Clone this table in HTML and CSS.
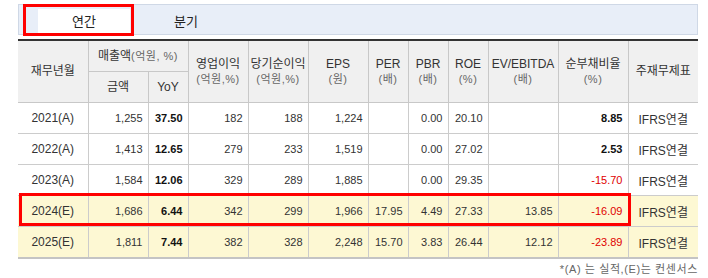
FILE: index.html
```html
<!DOCTYPE html>
<html lang="ko">
<head>
<meta charset="utf-8">
<link rel="stylesheet" href="styles.css">
</head>
<body>
<div class="wrap">
  <div class="tabbar">
    <div class="tab on">연간</div>
    <div class="tab">분기</div>
  </div>
  <div class="mark mark-tab"></div>
  <table class="fin">
    <colgroup>
      <col style="width:70px"><col style="width:60px"><col style="width:40px"><col style="width:60px"><col style="width:60px"><col style="width:60px"><col style="width:40px"><col style="width:40px"><col style="width:40px"><col style="width:70px"><col style="width:70px"><col style="width:70px">
    </colgroup>
    <thead>
      <tr>
        <th rowspan="2">재무년월</th>
        <th colspan="2">매출액<span class="unit">(억원, %)</span></th>
        <th rowspan="2">영업이익<br><span class="unit">(억원,%)</span></th>
        <th rowspan="2">당기순이익<br><span class="unit">(억원,%)</span></th>
        <th rowspan="2">EPS<br><span class="unit">(원)</span></th>
        <th rowspan="2">PER<br><span class="unit">(배)</span></th>
        <th rowspan="2">PBR<br><span class="unit">(배)</span></th>
        <th rowspan="2">ROE<br><span class="unit">(%)</span></th>
        <th rowspan="2">EV/EBITDA<br><span class="unit">(배)</span></th>
        <th rowspan="2">순부채비율<br><span class="unit">(%)</span></th>
        <th rowspan="2">주재무제표</th>
      </tr>
      <tr>
        <th>금액</th>
        <th>YoY</th>
      </tr>
    </thead>
    <tbody>
      <tr>
        <td class="c">2021(A)</td><td>1,255</td><td class="b">37.50</td><td>182</td><td>188</td><td>1,224</td><td></td><td>0.00</td><td>20.10</td><td></td><td class="b">8.85</td><td class="c">IFRS연결</td>
      </tr>
      <tr>
        <td class="c">2022(A)</td><td>1,413</td><td class="b">12.65</td><td>279</td><td>233</td><td>1,519</td><td></td><td>0.00</td><td>27.02</td><td></td><td class="b">2.53</td><td class="c">IFRS연결</td>
      </tr>
      <tr>
        <td class="c">2023(A)</td><td>1,584</td><td class="b">12.06</td><td>329</td><td>289</td><td>1,885</td><td></td><td>0.00</td><td>29.35</td><td></td><td class="neg">-15.70</td><td class="c">IFRS연결</td>
      </tr>
      <tr class="est">
        <td class="c">2024(E)</td><td>1,686</td><td class="b">6.44</td><td>342</td><td>299</td><td>1,966</td><td>17.95</td><td>4.49</td><td>27.33</td><td>13.85</td><td class="neg">-16.09</td><td class="c">IFRS연결</td>
      </tr>
      <tr class="est">
        <td class="c">2025(E)</td><td>1,811</td><td class="b">7.44</td><td>382</td><td>328</td><td>2,248</td><td>15.70</td><td>3.83</td><td>26.44</td><td>12.12</td><td class="neg">-23.89</td><td class="c">IFRS연결</td>
      </tr>
    </tbody>
  </table>
  <div class="mark mark-row"></div>
  <p class="note">*(A) 는 실적,(E)는 컨센서스</p>
</div>
</body>
</html>
```

FILE: styles.css
```css
html, body {
  margin: 0;
  padding: 0;
  background: #fff;
}
body {
  font-family: "Liberation Sans", "Noto Sans CJK KR", sans-serif;
  color: #333;
}
.wrap {
  position: relative;
  width: 680px;
  padding: 4px 10px 0 18px;
}
.tabbar {
  display: flex;
  align-items: flex-end;
  gap: 10px;
  padding-left: 19px;
  border: 1px solid #cfd8e6;
  background: #e8eef8;
  box-sizing: border-box;
  height: 31px;
}
.tab {
  width: 92px;
  height: 25px;
  line-height: 25px;
  text-align: center;
  font-size: 13px;
  color: #222;
}
.tab.on {
  background: #fff;
}
.mark {
  position: absolute;
  border: 3px solid #f00;
  box-sizing: border-box;
}
.mark-tab {
  left: 23px;
  top: 4px;
  width: 111px;
  height: 32px;
}
.mark-row {
  left: 19px;
  top: 193px;
  width: 612px;
  height: 33px;
}
.fin {
  margin-top: 4px;
  width: 680px;
  border-collapse: collapse;
  table-layout: fixed;
  border-top: 2px solid #333;
  border-bottom: 2px solid #c4c4c4;
  font-size: 11px;
}
.fin th {
  background: #f0f0f0;
  font-weight: normal;
  font-size: 12px;
  color: #333;
  height: 30px;
  padding: 0;
  border: 1px solid #c8c8c8;
  line-height: 15px;
  text-align: center;
  white-space: nowrap;
}
.fin th .unit {
  font-size: 11px;
  color: #666;
  letter-spacing: 0.5px;
}
.fin td {
  height: 30px;
  padding: 0 5px 0 0;
  border: 1px solid #cccccc;
  text-align: right;
  color: #333;
  white-space: nowrap;
}
.fin tr > :first-child {
  border-left: none;
}
.fin tr > :last-child {
  border-right: none;
}
.fin thead tr:nth-child(2) > :first-child {
  border-left: 1px solid #c8c8c8;
}
.fin td.c {
  text-align: center;
  padding: 0;
  font-size: 12px;
}
.fin td.b {
  font-weight: bold;
  color: #111;
}
.fin td.neg {
  color: #e00000;
}
.fin tr.est td {
  background: #fdf8d3;
}
.note {
  margin: 1px 0 0;
  text-align: right;
  font-size: 11px;
  color: #666;
  letter-spacing: 0.6px;
}
```
